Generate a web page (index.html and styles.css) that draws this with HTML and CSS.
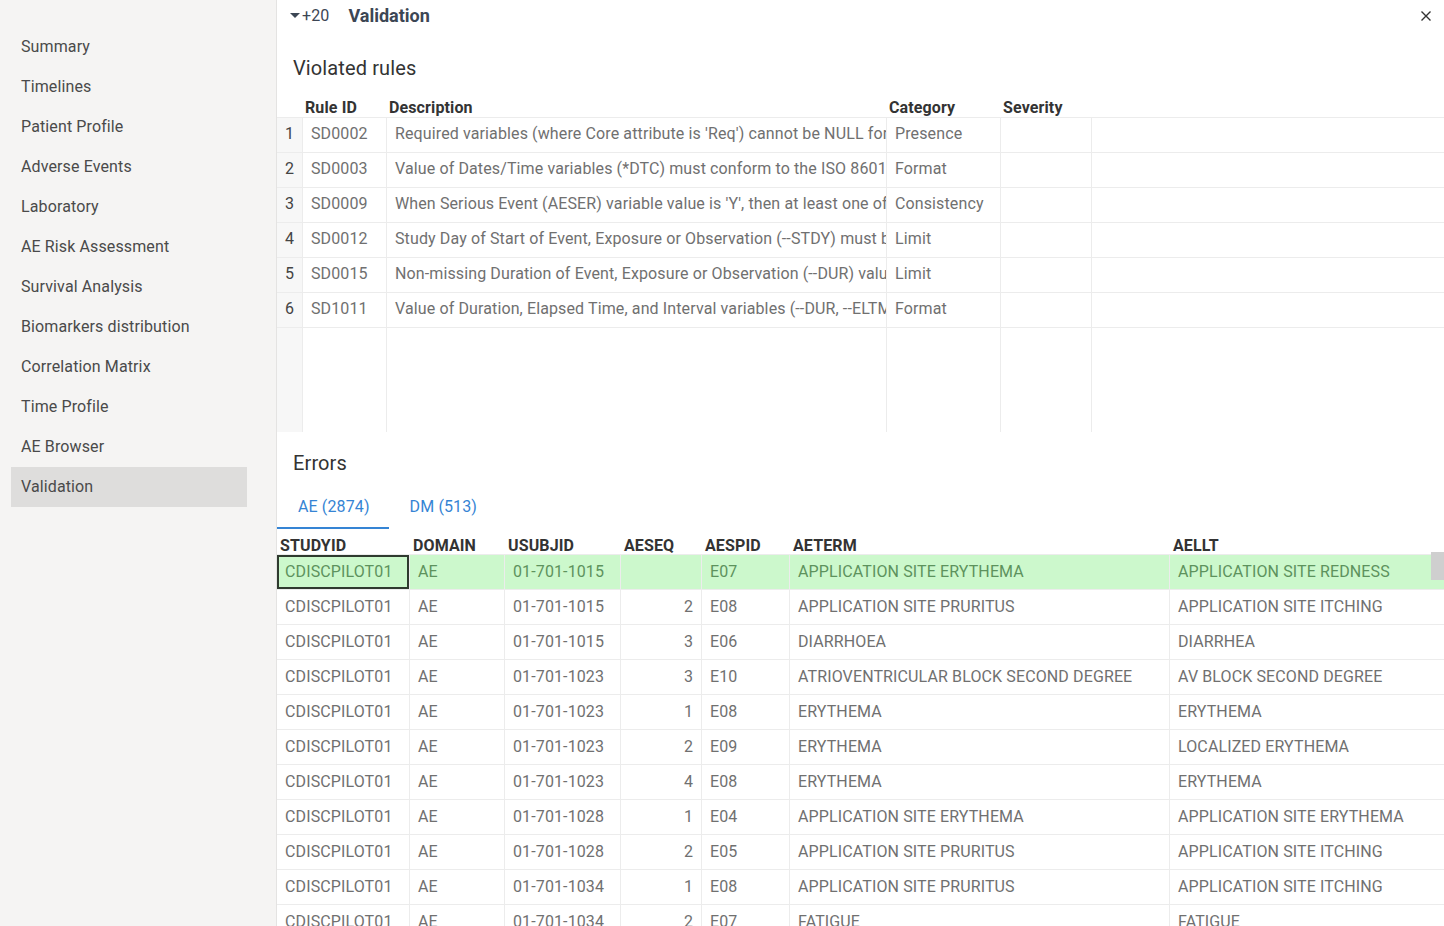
FILE: index.html
```html
<!DOCTYPE html>
<html>
<head>
<meta charset="utf-8">
<link rel="stylesheet" href="styles.css">
</head>
<body>
<div class="app">
  <nav class="sidebar">
    <div class="nav-item">Summary</div>
    <div class="nav-item">Timelines</div>
    <div class="nav-item">Patient Profile</div>
    <div class="nav-item">Adverse Events</div>
    <div class="nav-item">Laboratory</div>
    <div class="nav-item">AE Risk Assessment</div>
    <div class="nav-item">Survival Analysis</div>
    <div class="nav-item">Biomarkers distribution</div>
    <div class="nav-item">Correlation Matrix</div>
    <div class="nav-item">Time Profile</div>
    <div class="nav-item">AE Browser</div>
    <div class="nav-item active">Validation</div>
  </nav>
  <main class="main">
    <header class="topbar">
      <span class="caret"></span>
      <span class="count">+20</span>
      <span class="view-title">Validation</span>
      <span class="spacer"></span>
      <svg class="close" width="12" height="12" viewBox="0 0 12 12"><path d="M1.5 1.5 L10.5 10.5 M10.5 1.5 L1.5 10.5" stroke="#333" stroke-width="1.4" fill="none"/></svg>
    </header>

    <h2 class="section-title first">Violated rules</h2>
    <div class="rules">
      <div class="rrow rhead">
        <div class="rc num"></div>
        <div class="rc">Rule ID</div>
        <div class="rc">Description</div>
        <div class="rc">Category</div>
        <div class="rc">Severity</div>
        <div class="rc"></div>
      </div>
      <div class="rrow">
        <div class="rc num">1</div><div class="rc">SD0002</div>
        <div class="rc">Required variables (where Core attribute is 'Req') cannot be NULL for any records</div>
        <div class="rc">Presence</div><div class="rc"></div><div class="rc"></div>
      </div>
      <div class="rrow">
        <div class="rc num">2</div><div class="rc">SD0003</div>
        <div class="rc">Value of Dates/Time variables (*DTC) must conform to the ISO 8601 international standard</div>
        <div class="rc">Format</div><div class="rc"></div><div class="rc"></div>
      </div>
      <div class="rrow">
        <div class="rc num">3</div><div class="rc">SD0009</div>
        <div class="rc">When Serious Event (AESER) variable value is 'Y', then at least one of seriousness criteria variables is expected to have value 'Y'</div>
        <div class="rc">Consistency</div><div class="rc"></div><div class="rc"></div>
      </div>
      <div class="rrow">
        <div class="rc num">4</div><div class="rc">SD0012</div>
        <div class="rc">Study Day of Start of Event, Exposure or Observation (--STDY) must be less or equal to Study Day of End</div>
        <div class="rc">Limit</div><div class="rc"></div><div class="rc"></div>
      </div>
      <div class="rrow">
        <div class="rc num">5</div><div class="rc">SD0015</div>
        <div class="rc">Non-missing Duration of Event, Exposure or Observation (--DUR) value must be greater than or equal to 0</div>
        <div class="rc">Limit</div><div class="rc"></div><div class="rc"></div>
      </div>
      <div class="rrow">
        <div class="rc num">6</div><div class="rc">SD1011</div>
        <div class="rc">Value of Duration, Elapsed Time, and Interval variables (--DUR, --ELTM, --EVLINT) must conform to ISO 8601</div>
        <div class="rc">Format</div><div class="rc"></div><div class="rc"></div>
      </div>
      <div class="rrow rfill">
        <div class="rc num"></div><div class="rc"></div><div class="rc"></div><div class="rc"></div><div class="rc"></div><div class="rc"></div>
      </div>
    </div>

    <h2 class="section-title">Errors</h2>
    <div class="tabs">
      <div class="tab active">AE (2874)</div>
      <div class="tab">DM (513)</div>
    </div>

    <div class="errors">
      <div class="erow ehead">
        <div class="ec">STUDYID</div><div class="ec">DOMAIN</div><div class="ec">USUBJID</div><div class="ec">AESEQ</div><div class="ec">AESPID</div><div class="ec">AETERM</div><div class="ec">AELLT</div>
      </div>
      <div class="erow selected">
        <div class="ec focus">CDISCPILOT01</div><div class="ec">AE</div><div class="ec">01-701-1015</div><div class="ec r"></div><div class="ec">E07</div><div class="ec">APPLICATION SITE ERYTHEMA</div><div class="ec">APPLICATION SITE REDNESS</div>
      </div>
      <div class="erow">
        <div class="ec">CDISCPILOT01</div><div class="ec">AE</div><div class="ec">01-701-1015</div><div class="ec r">2</div><div class="ec">E08</div><div class="ec">APPLICATION SITE PRURITUS</div><div class="ec">APPLICATION SITE ITCHING</div>
      </div>
      <div class="erow">
        <div class="ec">CDISCPILOT01</div><div class="ec">AE</div><div class="ec">01-701-1015</div><div class="ec r">3</div><div class="ec">E06</div><div class="ec">DIARRHOEA</div><div class="ec">DIARRHEA</div>
      </div>
      <div class="erow">
        <div class="ec">CDISCPILOT01</div><div class="ec">AE</div><div class="ec">01-701-1023</div><div class="ec r">3</div><div class="ec">E10</div><div class="ec">ATRIOVENTRICULAR BLOCK SECOND DEGREE</div><div class="ec">AV BLOCK SECOND DEGREE</div>
      </div>
      <div class="erow">
        <div class="ec">CDISCPILOT01</div><div class="ec">AE</div><div class="ec">01-701-1023</div><div class="ec r">1</div><div class="ec">E08</div><div class="ec">ERYTHEMA</div><div class="ec">ERYTHEMA</div>
      </div>
      <div class="erow">
        <div class="ec">CDISCPILOT01</div><div class="ec">AE</div><div class="ec">01-701-1023</div><div class="ec r">2</div><div class="ec">E09</div><div class="ec">ERYTHEMA</div><div class="ec">LOCALIZED ERYTHEMA</div>
      </div>
      <div class="erow">
        <div class="ec">CDISCPILOT01</div><div class="ec">AE</div><div class="ec">01-701-1023</div><div class="ec r">4</div><div class="ec">E08</div><div class="ec">ERYTHEMA</div><div class="ec">ERYTHEMA</div>
      </div>
      <div class="erow">
        <div class="ec">CDISCPILOT01</div><div class="ec">AE</div><div class="ec">01-701-1028</div><div class="ec r">1</div><div class="ec">E04</div><div class="ec">APPLICATION SITE ERYTHEMA</div><div class="ec">APPLICATION SITE ERYTHEMA</div>
      </div>
      <div class="erow">
        <div class="ec">CDISCPILOT01</div><div class="ec">AE</div><div class="ec">01-701-1028</div><div class="ec r">2</div><div class="ec">E05</div><div class="ec">APPLICATION SITE PRURITUS</div><div class="ec">APPLICATION SITE ITCHING</div>
      </div>
      <div class="erow">
        <div class="ec">CDISCPILOT01</div><div class="ec">AE</div><div class="ec">01-701-1034</div><div class="ec r">1</div><div class="ec">E08</div><div class="ec">APPLICATION SITE PRURITUS</div><div class="ec">APPLICATION SITE ITCHING</div>
      </div>
      <div class="erow">
        <div class="ec">CDISCPILOT01</div><div class="ec">AE</div><div class="ec">01-701-1034</div><div class="ec r">2</div><div class="ec">E07</div><div class="ec">FATIGUE</div><div class="ec">FATIGUE</div>
      </div>
      <div class="scroll-thumb"></div>
    </div>
  </main>
</div>
</body>
</html>
```
FILE: styles.css
```css
* { box-sizing: border-box; }
html, body { margin: 0; padding: 0; }
body {
  font-family: Roboto, "Noto Sans", "Liberation Sans", sans-serif;
  letter-spacing: 0.12px;
  width: 1444px;
  height: 926px;
  overflow: hidden;
  background: #fff;
}
.app {
  display: flex;
  height: 926px;
}
.sidebar {
  width: 277px;
  flex: none;
  background: #f5f4f3;
  border-right: 1px solid #e4e3e2;
  padding-top: 27px;
}
.nav-item {
  margin: 0 29px 0 11px;
  height: 40px;
  line-height: 40px;
  padding-left: 10px;
  font-size: 16px;
  color: #4a4a4a;
}
.nav-item.active { background: #dedddc; }

.main {
  flex: 1;
  min-width: 0;
  display: flex;
  flex-direction: column;
  overflow: hidden;
}
.topbar {
  height: 30px;
  display: flex;
  align-items: center;
  padding: 0 12px 0 13px;
  flex: none;
}
.caret {
  width: 0; height: 0;
  border-left: 5px solid transparent;
  border-right: 5px solid transparent;
  border-top: 5px solid #3c4654;
  margin-right: 2px;
  margin-top: 1px;
}
.count { font-size: 16px; color: #3c4654; }
.view-title { font-size: 18px; font-weight: 700; color: #3c4654; margin-left: 19px; letter-spacing: 0; }
.spacer { flex: 1; }
.close { display: block; margin-top: 2px; }

.section-title {
  margin: 19px 0 0 16px;
  font-size: 20px;
  line-height: 24px;
  font-weight: 400;
  color: #333;
  flex: none;
}
.section-title.first { margin-top: 26px; }

.rules { margin-top: 16px; flex: none; }
.rrow {
  display: grid;
  grid-template-columns: 26px 84px 500px 114px 91px 1fr;
  height: 35px;
  border-bottom: 1px solid #ececec;
  font-size: 16px;
  color: #707070;
}
.rc {
  border-right: 1px solid #ececec;
  padding: 0 8px;
  line-height: 32px;
  white-space: nowrap;
  overflow: hidden;
}
.rc:last-child { border-right: none; }
.rc.num { background: #f7f7f7; padding: 0; text-align: center; color: #444; }
.rhead {
  height: 22px;
  font-weight: 700;
  color: #333;
}
.rhead .rc { border-right: none; padding: 0 2px; line-height: 23px; }
.rhead .rc.num { background: transparent; }
.rfill { height: 104px; border-bottom: none; }

.section-title + .tabs { margin-top: 8px; }
.tabs {
  display: flex;
  flex: none;
}
.tab {
  font-size: 16px;
  color: #3584d4;
  line-height: 20px;
  white-space: nowrap;
  padding: 14px 19px 10px 21px;
  border-bottom: 2px solid transparent;
}
.tab.active { border-bottom-color: #3584d4; }

.errors { position: relative; flex: none; }
.erow {
  display: grid;
  grid-template-columns: 133px 95px 116px 81px 88px 380px 1fr;
  height: 35px;
  border-bottom: 1px solid #ececec;
  font-size: 16px;
  color: #707070;
}
.ec {
  border-right: 1px solid #ececec;
  padding: 0 8px;
  line-height: 33px;
  white-space: nowrap;
  overflow: hidden;
}
.ec:last-child { border-right: none; }
.ec.r { text-align: right; }
.ehead {
  height: 26px;
  font-weight: 700;
  color: #333;
}
.ehead .ec { border-right: none; padding: 7px 3px 0; line-height: 19px; }
.erow.selected { background: #ccf8cc; color: #5d925d; }
.ec.focus { box-shadow: inset 0 0 0 2px #2f3a2f; }
.scroll-thumb {
  position: absolute;
  right: 0;
  top: 23px;
  width: 13px;
  height: 28px;
  background: #cfcfcf;
}
```
